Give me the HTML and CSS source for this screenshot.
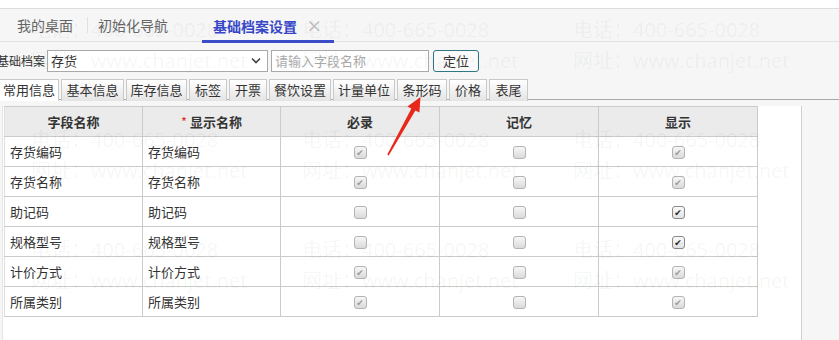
FILE: index.html
```html
<!DOCTYPE html>
<html lang="zh-CN">
<head>
    <meta charset="UTF-8">
    <meta name="viewport" content="width=device-width, initial-scale=1.0">
    <title>基础档案设置</title>
    <link rel="stylesheet" href="styles.css">
</head>
<body>
    <div class="top-strip"></div>

    <!-- Page tabs -->
    <div class="nav-tabs">
        <span class="nav-tab">我的桌面</span>
        <span class="nav-sep"></span>
        <span class="nav-tab">初始化导航</span>
        <span class="nav-tab active">基础档案设置 <span class="close">×</span></span>
    </div>

    <!-- Search row -->
    <div class="toolbar">
        <label class="toolbar-label" for="archive">基础档案</label>
        <div class="select-box" id="archive">
            <span>存货</span>
            <svg width="10" height="7" viewBox="0 0 10 7"><path d="M1 1.5 L5 5.5 L9 1.5" fill="none" stroke="#444" stroke-width="1.6"/></svg>
        </div>
        <input class="search-input" type="text" placeholder="请输入字段名称">
        <button class="locate-btn">定位</button>
    </div>

    <!-- Sub tabs -->
    <div class="sub-tabs">
        <span class="sub-tab active">常用信息</span>
        <span class="sub-tab">基本信息</span>
        <span class="sub-tab">库存信息</span>
        <span class="sub-tab">标签</span>
        <span class="sub-tab">开票</span>
        <span class="sub-tab">餐饮设置</span>
        <span class="sub-tab">计量单位</span>
        <span class="sub-tab">条形码</span>
        <span class="sub-tab">价格</span>
        <span class="sub-tab">表尾</span>
    </div>

    <div class="panel">
        <table class="field-table">
            <colgroup>
                <col class="col-name">
                <col class="col-name">
                <col class="col-check">
                <col class="col-check">
                <col class="col-check">
            </colgroup>
            <thead>
                <tr>
                    <th>字段名称</th>
                    <th><span class="required">*</span>显示名称</th>
                    <th>必录</th>
                    <th>记忆</th>
                    <th>显示</th>
                </tr>
            </thead>
            <tbody id="rows"></tbody>
        </table>
    </div>

    <!-- Watermark -->
    <div class="watermark">
        <div class="wm-block"><span>电话：400-665-0028</span><span>网址：www.chanjet.net</span></div>
        <div class="wm-block"><span>电话：400-665-0028</span><span>网址：www.chanjet.net</span></div>
        <div class="wm-block"><span>电话：400-665-0028</span><span>网址：www.chanjet.net</span></div>
        <div class="wm-block"><span>电话：400-665-0028</span><span>网址：www.chanjet.net</span></div>
        <div class="wm-block"><span>电话：400-665-0028</span><span>网址：www.chanjet.net</span></div>
        <div class="wm-block"><span>电话：400-665-0028</span><span>网址：www.chanjet.net</span></div>
        <div class="wm-block"><span>电话：400-665-0028</span><span>网址：www.chanjet.net</span></div>
        <div class="wm-block"><span>电话：400-665-0028</span><span>网址：www.chanjet.net</span></div>
        <div class="wm-block"><span>电话：400-665-0028</span><span>网址：www.chanjet.net</span></div>
    </div>

    <!-- Red annotation arrow -->
    <svg class="annotation" width="839" height="340" viewBox="0 0 839 340">
        <polygon points="387.3,154.6 411.4,108.6 407.4,106.4 420.5,97 419.4,112.6 415.4,110.4 388.7,155.4" fill="#e8281b"/>
    </svg>

    <script>
        // field rows: [name, display, required, remember, show]
        // 0 = unchecked, 1 = checked (disabled), 2 = checked (enabled)
        const fields = [
            ["存货编码", "存货编码", 1, 0, 1],
            ["存货名称", "存货名称", 1, 0, 1],
            ["助记码", "助记码", 0, 0, 2],
            ["规格型号", "规格型号", 0, 0, 2],
            ["计价方式", "计价方式", 1, 0, 1],
            ["所属类别", "所属类别", 1, 0, 1]
        ];

        const box = (state) => {
            if (state === 0) return '<span class="cb"></span>';
            if (state === 1) return '<span class="cb checked">✔</span>';
            return '<span class="cb checked on">✔</span>';
        };

        document.getElementById("rows").innerHTML = fields.map(f =>
            `<tr>
                <td>${f[0]}</td>
                <td>${f[1]}</td>
                <td class="center">${box(f[2])}</td>
                <td class="center">${box(f[3])}</td>
                <td class="center">${box(f[4])}</td>
            </tr>`
        ).join("");
    </script>
</body>
</html>
```

FILE: styles.css
```css
body {
    font-family: "Noto Sans CJK SC", "DejaVu Sans", sans-serif;
    background-color: #f6f6f6;
    margin: 0;
    padding: 0;
    height: 340px;
    overflow: hidden;
    color: #333;
}

.top-strip {
    height: 8px;
    background: #fff;
    border-bottom: 1px solid #dcdcdc;
}

/* Page tabs */
.nav-tabs {
    height: 32px;
    display: flex;
    align-items: center;
    border-bottom: 1px solid #e2e2e2;
    font-size: 14px;
}

.nav-tab {
    color: #666;
    line-height: 32px;
}

.nav-tab:first-child {
    margin-left: 17px;
}

.nav-sep {
    width: 1px;
    height: 16px;
    background: #e0e0e0;
    margin: 0 10px 0 14px;
}

.nav-tab.active {
    margin-left: 34px;
    padding: 0 12px 0 11px;
    color: #3847c8;
    font-weight: bold;
    border-bottom: 3px solid #3d4cc8;
    line-height: 29px;
    height: 29px;
    margin-top: 3px;
}

.nav-tab .close {
    font-weight: normal;
    color: #b5b5b5;
    font-size: 16px;
    margin-left: 6px;
}

/* Search row */
.toolbar {
    height: 37px;
    display: flex;
    align-items: center;
    font-size: 13px;
}

.toolbar-label {
    font-size: 12px;
    margin-left: -3px;
    width: 50px;
    color: #333;
}

.select-box {
    height: 20px;
    border: 1px solid #a9a9a9;
    background: #fff;
    display: flex;
    align-items: center;
    justify-content: space-between;
    padding: 0 6px 0 3px;
    box-sizing: content-box;
    width: 210px;
}

.search-input {
    margin-left: 3px;
    width: 150px;
    height: 20px;
    border: 1px solid #a9a9a9;
    padding: 0 3px;
    font-family: inherit;
    font-size: 13px;
    color: #333;
    outline: none;
}

.search-input::placeholder {
    color: #aaa;
}

.locate-btn {
    margin-left: 4px;
    height: 22px;
    width: 46px;
    border: 1px solid #2f7888;
    border-radius: 3px;
    background: #fafafa;
    font-family: inherit;
    font-size: 13px;
    color: #333;
    padding: 0;
}

/* Sub tabs */
.sub-tabs {
    display: grid;
    grid-template-columns: 59px 63px 61px 38px 38px 62px 62px 50px 38px 39px;
    gap: 2px;
    height: 20px;
    border-bottom: 1px solid #a8a8a8;
    font-size: 13px;
}

.sub-tab {
    border: 1px solid #c9c9c9;
    border-bottom: none;
    background: linear-gradient(#ffffff, #e4e4e4);
    text-align: center;
    line-height: 19px;
    color: #333;
    white-space: nowrap;
}

.sub-tab.active {
    background: #fff;
    height: 21px;
    border-left: none;
}

/* Table panel */
.panel {
    margin: 6px 0 0 2px;
    width: 798px;
    height: 240px;
    background: #fff;
    border: 1px solid #cfcfcf;
    border-left-color: #e6e6e6;
    border-top: none;
}

.field-table {
    border-collapse: collapse;
    table-layout: fixed;
    margin-left: 1px;
    font-size: 13px;
}

.col-name {
    width: 138px;
}

.col-check {
    width: 159px;
}

.field-table th,
.field-table td {
    border: 1px solid #cbcbcb;
    height: 29px;
    padding: 0 5px;
}

.field-table th {
    background: #ebebeb;
    font-weight: bold;
    color: #333;
    text-align: center;
}

.field-table th:first-child,
.field-table td:first-child {
    border-left-color: #e0e0e0;
}

.required {
    color: #e03030;
    font-weight: normal;
    margin-right: 3px;
}

.field-table td {
    color: #333;
}

.center {
    text-align: center;
}

/* Checkboxes */
.cb {
    display: inline-block;
    width: 11px;
    height: 11px;
    border: 1px solid #b4b4b4;
    border-radius: 3px;
    background: linear-gradient(#f7f7f7, #dadada);
    vertical-align: middle;
    font-size: 9px;
    line-height: 11px;
    text-align: center;
    color: #9a9a9a;
    margin-top: -2px;
}

.cb.on {
    color: #222;
    border-color: #8a8a8a;
    background: linear-gradient(#fafafa, #e2e2e2);
}

/* Watermark overlay */
.watermark {
    position: absolute;
    top: 0;
    left: 0;
    width: 839px;
    height: 340px;
    pointer-events: none;
    display: grid;
    grid-template-columns: repeat(3, 271px);
    grid-auto-rows: 110px;
    padding-left: 31px;
    box-sizing: border-box;
    font-family: "Open Sans", "Noto Sans CJK SC", sans-serif;
    font-size: 20px;
    color: rgba(0, 0, 0, 0.05);
    white-space: nowrap;
}

.wm-block {
    display: flex;
    flex-direction: column;
    padding-top: 14px;
    line-height: 31px;
}

.annotation {
    position: absolute;
    top: 0;
    left: 0;
    pointer-events: none;
}
```
